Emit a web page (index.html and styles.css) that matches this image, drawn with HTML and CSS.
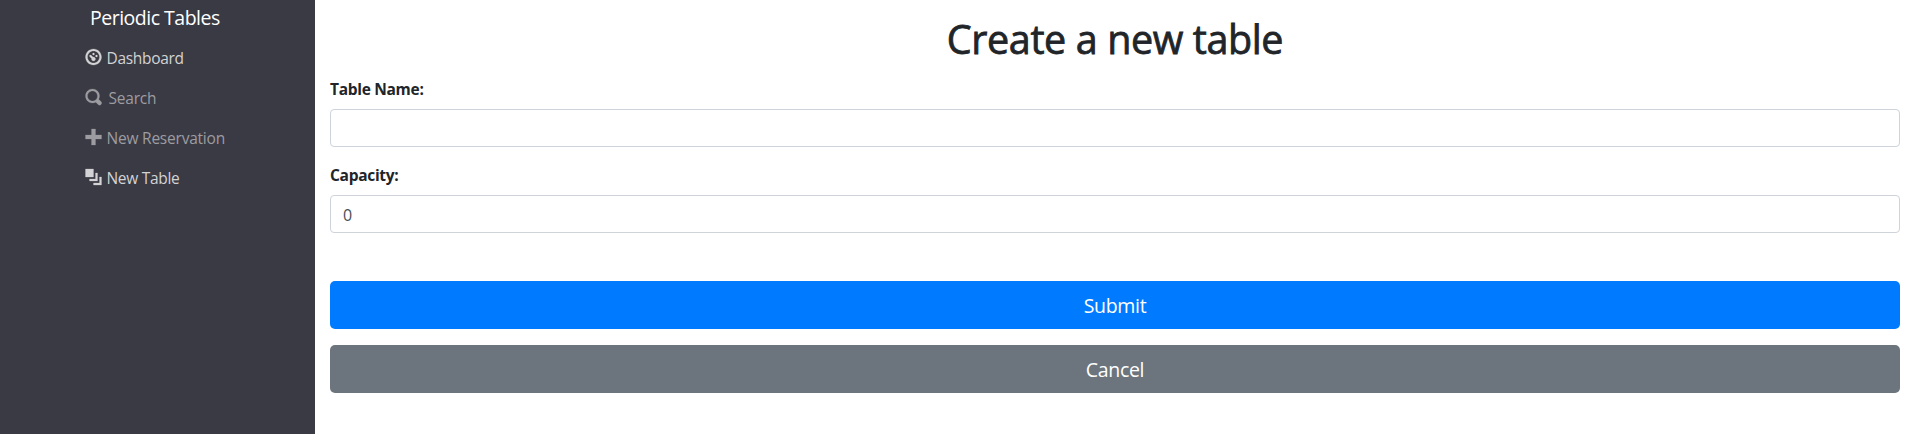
FILE: index.html
```html
<!DOCTYPE html>
<html lang="en">
<head>
<meta charset="utf-8">
<title>Periodic Tables</title>
<link rel="stylesheet" href="styles.css">
</head>
<body>
<div class="layout">
  <nav class="sidebar">
    <a class="brand"><span>Periodic Tables</span></a>
    <ul class="menu">
      <li class="bright"><svg class="icon" viewBox="0 0 8 8"><path d="M4 0c-2.2 0-4 1.8-4 4s1.8 4 4 4 4-1.8 4-4-1.8-4-4-4zm0 1c1.66 0 3 1.34 3 3s-1.34 3-3 3-3-1.34-3-3 1.34-3 3-3zm0 1c-.28 0-.5.22-.5.5s.22.5.5.5.5-.22.5-.5-.22-.5-.5-.5zm-1.66 1a.5.5 0 0 0-.19.84l.91.91c-.02.08-.06.16-.06.25 0 .55.45 1 1 1s1-.45 1-1-.45-1-1-1c-.09 0-.17.04-.25.06l-.91-.91a.5.5 0 0 0-.44-.16.5.5 0 0 0-.06 0zm3.16 0c-.28 0-.5.22-.5.5s.22.5.5.5.5-.22.5-.5-.22-.5-.5-.5z"/></svg><span class="t-dashboard">Dashboard</span></li>
      <li><svg class="icon" viewBox="0 0 8 8"><path d="M3.5 0c-1.93 0-3.5 1.57-3.5 3.5s1.57 3.5 3.5 3.5c.59 0 1.17-.14 1.66-.41a1 1 0 0 0 .13.13l1 1a1.02 1.02 0 1 0 1.44-1.44l-1-1a1 1 0 0 0-.16-.13c.27-.49.44-1.06.44-1.66 0-1.93-1.55-3.5-3.5-3.5zm0 1c1.39 0 2.5 1.11 2.5 2.5 0 .66-.24 1.27-.66 1.72-.01.01-.02.02-.03.03a1 1 0 0 0-.13.13c-.44.4-1.04.63-1.69.63-1.39 0-2.5-1.11-2.5-2.5s1.11-2.5 2.5-2.5z"/></svg><span class="t-search">Search</span></li>
      <li><svg class="icon" viewBox="0 0 8 8"><path d="M3 0v3h-3v2h3v3h2v-3h3v-2h-3v-3h-2z"/></svg><span class="t-reservation">New Reservation</span></li>
      <li class="bright"><svg class="icon" viewBox="0 0 8 8"><path d="M0 0v4h4v-4h-4zm5 2v3h-3v1h4v-4h-1zm2 2v3h-3v1h4v-4h-1z"/></svg><span class="t-table">New Table</span></li>
    </ul>
  </nav>
  <main class="content">
    <h1>Create a new table</h1>
    <form>
      <label class="l-name" for="table_name">Table Name:</label>
      <input id="table_name" type="text">
      <label class="l-capacity" for="capacity">Capacity:</label>
      <input id="capacity" type="text" value="0">
      <button class="btn submit" type="button">Submit</button>
      <button class="btn cancel" type="button">Cancel</button>
    </form>
  </main>
</div>
</body>
</html>
```
FILE: styles.css
```css
* { box-sizing: border-box; }
body {
  margin: 0;
  font-family: "Open Sans", "Noto Sans", sans-serif;
  font-size: 16px;
  line-height: 24px;
  color: #212529;
  background: #fff;
  overflow: hidden;
}
.layout { display: flex; height: 434px; }
.sidebar { flex: 0 0 315px; background: #3a3a44; }
.brand {
  display: block;
  padding: 3px 0 0 90px;
  height: 38px;
  line-height: 30px;
  font-size: 19.5px;
  letter-spacing: -0.5px;
  color: #fff;
}
.menu { list-style: none; margin: 0; padding: 0 0 0 85px; }
.menu li {
  display: flex;
  align-items: center;
  gap: 4.5px;
  height: 40px;
  color: #9d9ca1;
  font-size: 15.5px;
  letter-spacing: -0.22px;
}
.menu .bright { color: #d3d3d5; }
.icon {
  width: 17px;
  height: 16px;
  margin-top: -2px;
  overflow: visible;
  fill: currentColor;
  stroke: currentColor;
  stroke-width: 0.12;
}
.t-dashboard { letter-spacing: -0.3px; }
.menu .t-table { letter-spacing: -0.3px; }
.t-search { margin-left: 2px; }
.content { flex: 1; padding: 15px 13px 0 15px; }
h1 {
  margin: 0;
  height: 62px;
  text-align: center;
  font-size: 39.5px;
  line-height: 48px;
  font-weight: 400;
  letter-spacing: -0.4px;
  -webkit-text-stroke: 0.8px #212529;
}
form { display: flex; flex-direction: column; }
label {
  height: 24px;
  margin: 0 0 8px;
  font-size: 15.5px;
  font-weight: 700;
  letter-spacing: -0.3px;
}
input {
  height: 38px;
  width: 100%;
  margin: 0 0 16px;
  padding: 7px 12px 5px;
  border: 1px solid #ced4da;
  border-radius: 4px;
  font: inherit;
  color: #495057;
}
.btn {
  height: 48px;
  padding: 2px 0 0;
  border: 0;
  border-radius: 5px;
  font-family: inherit;
  font-size: 19.5px;
  letter-spacing: -0.3px;
  line-height: 30px;
  color: #fff;
}
.submit { background: #007bff; margin-top: 32px; }
.cancel { background: #6c757d; margin-top: 16px; }
```
